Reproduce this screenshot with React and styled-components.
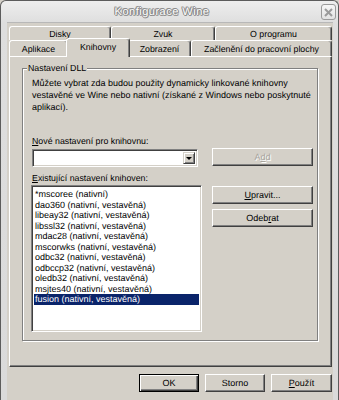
import React from "react";
import styled, { createGlobalStyle } from "styled-components";

const GlobalStyle = createGlobalStyle`
  html, body {
    margin: 0;
    padding: 0;
    background: #d4d0c8;
  }
  body {
    font-family: "Liberation Sans", Arial, sans-serif;
    font-size: 9px;
    color: #000;
    text-rendering: geometricPrecision;
  }
`;

const Window = styled.div`
  width: 339px;
  height: 400px;
  box-sizing: border-box;
  border: 1px solid #5c5c5c;
  border-bottom: none;
  border-radius: 6px 6px 0 0;
  background: linear-gradient(#eeeeee, #dedede 22px, #dadada);
  padding: 0 5px 0 6px;
  display: flex;
  flex-direction: column;
`;

const TitleBar = styled.div`
  height: 21px;
  display: flex;
  align-items: center;
`;

const Title = styled.div`
  flex: 1;
  text-align: center;
  font-size: 11px;
  letter-spacing: 0.5px;
  color: #fff;
  padding-right: 4px;
  text-shadow: 1px 0 #8a8a8a, -1px 0 #8a8a8a, 0 1px #8a8a8a, 0 -1px #8a8a8a,
    1px 1px #9a9a9a, -1px -1px #9a9a9a;
`;

const CloseButton = styled.div`
  width: 13px;
  height: 14px;
  margin-right: -3px;
  margin-top: 1px;
  border: 1px solid #9a9a9a;
  border-radius: 3px;
  background: linear-gradient(#f6f6f6, #e2e2e2);
  display: flex;
  align-items: center;
  justify-content: center;
`;

const Client = styled.div`
  flex: 1;
  background: #d4d0c8;
  border-top: 1px solid #b8b8b8;
  padding: 3px 1px 0 2px;
  display: flex;
  flex-direction: column;
`;

const TabRow = styled.div`
  display: flex;
  height: ${(p) => p.h}px;
  align-items: flex-end;
`;

const Tab = styled.div`
  position: relative;
  box-sizing: border-box;
  width: ${(p) => (p.active ? p.w + 4 : p.w)}px;
  height: ${(p) => (p.active ? p.h + 3 : p.h)}px;
  margin: ${(p) => (p.active ? "0 -2px -1px -2px" : "0")};
  z-index: ${(p) => (p.active ? 2 : 1)};
  background: #d4d0c8;
  border-top: 1px solid #fff;
  border-left: 1px solid #fff;
  border-right: 1px solid #404040;
  box-shadow: inset -1px 0 #808080;
  border-radius: 3px 3px 0 0;
  display: flex;
  align-items: center;
  justify-content: center;
  font-size: 8.8px;
  padding-bottom: ${(p) => (p.active ? 2 : 0)}px;
`;

const Panel = styled.div`
  position: relative;
  z-index: 1;
  height: 311px;
  box-sizing: border-box;
  border: 1px solid;
  border-color: #fff #404040 #404040 #fff;
  box-shadow: inset -1px -1px #808080;
  padding: 11px 13px 0 12px;
`;

const GroupBox = styled.div`
  position: relative;
  height: 273px;
  box-sizing: border-box;
  border: 1px solid #808080;
  box-shadow: 1px 1px 0 #fff, inset 1px 1px 0 #fff;
  padding: 8px 4px 0 9px;
`;

const Legend = styled.span`
  position: absolute;
  top: -7px;
  left: 4px;
  padding: 0 1px;
  line-height: 12px;
  font-size: 8.8px;
  background: #d4d0c8;
`;

const Text = styled.p`
  margin: 0;
  line-height: 12px;
  width: 284px;
  font-size: 9px;
`;

const Label = styled.div`
  line-height: 12px;
  font-size: 8.8px;
  margin-top: ${(p) => p.mt}px;
  margin-bottom: ${(p) => p.mb}px;
`;

const Row = styled.div`
  display: flex;
  justify-content: space-between;
  align-items: flex-start;
  margin-left: ${(p) => p.ml || 0}px;
`;

const Sunken = styled.div`
  box-sizing: border-box;
  background: #fff;
  border: 1px solid;
  border-color: #808080 #fff #fff #808080;
  box-shadow: inset 1px 1px #404040, inset -1px -1px #d4d0c8;
`;

const Combo = styled(Sunken)`
  width: 166px;
  height: 18px;
  display: flex;
  justify-content: flex-end;
  padding: 2px;
`;

const DropButton = styled.div`
  width: 12px;
  height: 12px;
  box-sizing: border-box;
  background: #d4d0c8;
  border: 1px solid;
  border-color: #d4d0c8 #404040 #404040 #d4d0c8;
  box-shadow: inset 1px 1px #fff, inset -1px -1px #808080;
  display: flex;
  align-items: center;
  justify-content: center;
`;

const Arrow = styled.div`
  width: 0;
  height: 0;
  border-left: 3px solid transparent;
  border-right: 3px solid transparent;
  border-top: 3px solid #000;
`;

const Button = styled.div`
  box-sizing: border-box;
  width: ${(p) => p.w}px;
  height: ${(p) => p.h || 18}px;
  margin-top: ${(p) => p.mt || 0}px;
  background: #d4d0c8;
  border: 1px solid;
  border-color: ${(p) => (p.def ? "#000" : "#fff #404040 #404040 #fff")};
  box-shadow: ${(p) =>
    p.def
      ? "inset 1px 1px #fff, inset -1px -1px #404040, inset -2px -2px #808080"
      : "inset -1px -1px #808080"};
  display: flex;
  align-items: center;
  justify-content: center;
  font-size: 9px;
  color: ${(p) => (p.disabled ? "#a8a59e" : "#000")};
  text-shadow: ${(p) => (p.disabled ? "1px 1px #fff" : "none")};
`;

const List = styled(Sunken)`
  width: 171px;
  height: 147px;
  padding: 3px 2px;
`;

const Item = styled.div`
  line-height: 10.5px;
  height: 10.5px;
  padding-left: 1px;
  font-size: 9px;
  white-space: nowrap;
  background: ${(p) => (p.selected ? "#0a246a" : "transparent")};
  color: ${(p) => (p.selected ? "#fff" : "#000")};
`;

const SideButtons = styled.div`
  display: flex;
  flex-direction: column;
  gap: 5px;
  margin-top: 1px;
`;

const Footer = styled.div`
  display: flex;
  justify-content: flex-end;
  gap: 6px;
  margin-top: 7px;
`;

const U = styled.span`
  text-decoration: underline;
`;

const items = [
  "*mscoree (nativní)",
  "dao360 (nativní, vestavěná)",
  "libeay32 (nativní, vestavěná)",
  "libssl32 (nativní, vestavěná)",
  "mdac28 (nativní, vestavěná)",
  "mscorwks (nativní, vestavěná)",
  "odbc32 (nativní, vestavěná)",
  "odbccp32 (nativní, vestavěná)",
  "oledb32 (nativní, vestavěná)",
  "msjtes40 (nativní, vestavěná)",
  "fusion (nativní, vestavěná)",
];

export default function App() {
  return (
    <>
      <GlobalStyle />
      <Window>
        <TitleBar>
          <Title>Konfigurace Wine</Title>
          <CloseButton>
            <svg width="9" height="9" viewBox="0 0 9 9">
              <path d="M1 1 L8 8 M8 1 L1 8" stroke="#9a9a9a" strokeWidth="2" />
            </svg>
          </CloseButton>
        </TitleBar>
        <Client>
          <TabRow h={14}>
            <Tab w={102} h={14}>Disky</Tab>
            <Tab w={104} h={14}>Zvuk</Tab>
            <Tab w={117} h={14}>O programu</Tab>
          </TabRow>
          <TabRow h={16}>
            <Tab w={59} h={16}>Aplikace</Tab>
            <Tab w={60} h={16} active>
              Knihovny
            </Tab>
            <Tab w={63} h={16}>Zobrazení</Tab>
            <Tab w={141} h={16}>Začlenění do pracovní plochy</Tab>
          </TabRow>
          <Panel>
            <GroupBox>
              <Legend>Nastavení DLL</Legend>
              <Text>
                Můžete vybrat zda budou použity dynamicky linkované knihovny
                vestavěné ve Wine nebo nativní (získané z Windows nebo
                poskytnuté aplikací).
              </Text>
              <Label mt={22} mb={2}>
                <U>N</U>ové nastavení pro knihovnu:
              </Label>
              <Row>
                <Combo>
                  <DropButton>
                    <Arrow />
                  </DropButton>
                </Combo>
                <Button w={101} mt={-1} disabled>
                  A<U>d</U>d
                </Button>
              </Row>
              <Label mt={5} mb={1}>
                <U>E</U>xistující nastavení knihoven:
              </Label>
              <Row ml={-1}>
                <List>
                  {items.map((it, i) => (
                    <Item key={it} selected={i === items.length - 1}>
                      {it}
                    </Item>
                  ))}
                </List>
                <SideButtons>
                  <Button w={101}>
                    <span>
                      <U>U</U>pravit...
                    </span>
                  </Button>
                  <Button w={101}>
                    <span>
                      Odeb<U>r</U>at
                    </span>
                  </Button>
                </SideButtons>
              </Row>
            </GroupBox>
          </Panel>
          <Footer>
            <Button w={60} def>
              OK
            </Button>
            <Button w={60}>Storno</Button>
            <Button w={61}>
              <span>
                <U>P</U>oužít
              </span>
            </Button>
          </Footer>
        </Client>
      </Window>
    </>
  );
}
